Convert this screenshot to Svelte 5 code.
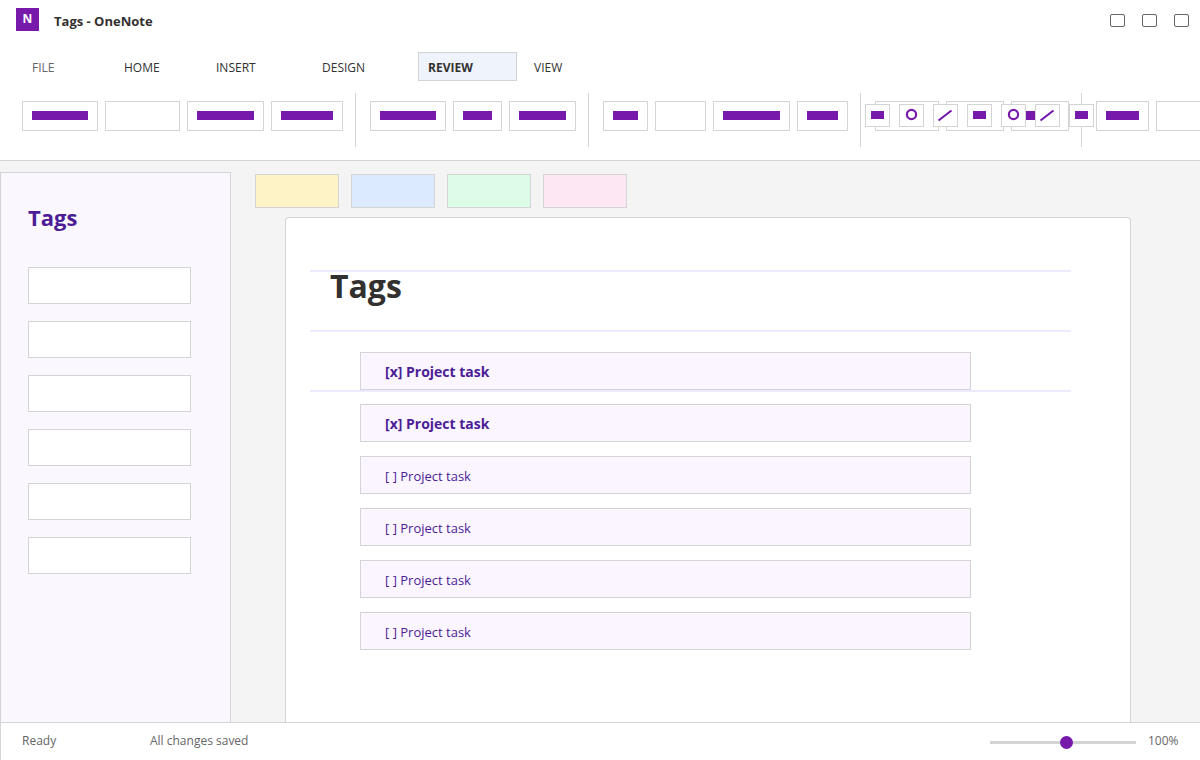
<script>
  const tabs = [
    { name: 'FILE', width: 85 },
    { name: 'HOME', width: 85 },
    { name: 'INSERT', width: 99 },
    { name: 'DESIGN', width: 99 },
    { name: 'REVIEW', width: 99 },
    { name: 'VIEW', width: 99 },
  ];

  // Ribbon commands, one array per group
  const groups = [
    [
      { width: 76, filled: true },
      { width: 75, filled: false },
      { width: 77, filled: true },
      { width: 72, filled: true },
    ],
    [
      { width: 76, filled: true },
      { width: 49, filled: true },
      { width: 67, filled: true },
    ],
    [
      { width: 45, filled: true },
      { width: 51, filled: false },
      { width: 77, filled: true },
      { width: 51, filled: true },
    ],
    [
      { width: 64, filled: false },
      { width: 58, filled: false },
      { width: 58, filled: true },
    ],
    [
      { width: 53, filled: true },
      { width: 76, filled: false },
    ],
  ];

  const tools = ['box', 'ring', 'line', 'box', 'ring', 'line', 'box'];
  const swatches = ['yellow', 'blue', 'green', 'pink'];
  const sections = [1, 2, 3, 4, 5, 6];

  let activeTab = $state('REVIEW');
  let zoom = $state(100);
  let tasks = $state([
    { text: 'Project task', done: true },
    { text: 'Project task', done: true },
    { text: 'Project task', done: false },
    { text: 'Project task', done: false },
    { text: 'Project task', done: false },
    { text: 'Project task', done: false },
  ]);
</script>

<div class="window">
  <header class="titlebar">
    <span class="logo">N</span>
    <span class="window-title">Tags - OneNote</span>
    <div class="window-controls">
      <button aria-label="Minimize"></button>
      <button aria-label="Maximize"></button>
      <button aria-label="Close"></button>
    </div>
  </header>

  <nav class="tabs">
    {#each tabs as tab}
      <button
        class="tab"
        class:file={tab.name === 'FILE'}
        class:active={activeTab === tab.name}
        style:width="{tab.width}px"
        onclick={() => (activeTab = tab.name)}
      >{tab.name}</button>
    {/each}
  </nav>

  <div class="ribbon">
    {#each groups as group}
      <div class="group">
        {#each group as command}
          <button class="command" style:width="{command.width}px" aria-label="Command">
            {#if command.filled}<span class="bar"></span>{/if}
          </button>
        {/each}
      </div>
    {/each}

    <!-- Floating drawing tools over the ribbon -->
    <div class="tools">
      {#each tools as tool}
        <button class="tool" aria-label={tool}>
          <svg width="23" height="21" viewBox="0 0 23 21">
            {#if tool === 'box'}
              <rect x="5" y="6" width="13" height="8" fill="#7719aa" />
            {:else if tool === 'ring'}
              <circle cx="11.5" cy="9.5" r="4.6" fill="none" stroke="#7719aa" stroke-width="2.2" />
            {:else}
              <path d="M4.5 15.5L17.5 5.5" fill="none" stroke="#7719aa" stroke-width="2.2" />
            {/if}
          </svg>
        </button>
      {/each}
    </div>
  </div>

  <div class="body">
    <aside class="sidebar">
      <h2>Tags</h2>
      <div class="sections">
        {#each sections as section}
          <button class="section" aria-label="Section {section}"></button>
        {/each}
      </div>
    </aside>

    <main class="content">
      <div class="swatches">
        {#each swatches as swatch}
          <button class="swatch {swatch}" aria-label={swatch}></button>
        {/each}
      </div>

      <article class="page">
        <div class="rules">
          <span></span>
          <span></span>
          <span></span>
        </div>
        <div class="note">
          <h1>Tags</h1>
          <div class="tasks">
            {#each tasks as task}
              <button
                class="task"
                class:done={task.done}
                aria-pressed={task.done}
                onclick={() => (task.done = !task.done)}
              >{task.done ? '[x]' : '[ ]'} {task.text}</button>
            {/each}
          </div>
        </div>
      </article>
    </main>
  </div>

  <footer class="statusbar">
    <span class="state">Ready</span>
    <span>All changes saved</span>
    <label class="zoom">
      <input type="range" min="0" max="190" bind:value={zoom} aria-label="Zoom" />
      <span class="zoom-value">{zoom}%</span>
    </label>
  </footer>
</div>

<style>
  :global(body) {
    margin: 0;
  }

  .window {
    display: flex;
    flex-direction: column;
    height: 100vh;
    overflow: hidden;
    background: #f4f4f4;
    color: #323130;
    font-family: 'Segoe UI', 'Open Sans', 'Noto Sans', sans-serif;
    font-size: 12px;
  }

  button {
    box-sizing: border-box;
    margin: 0;
    padding: 0;
    border: 1px solid #d4d4d4;
    border-radius: 0;
    background: #fff;
    color: inherit;
    font: inherit;
    cursor: pointer;
  }

  .titlebar {
    display: flex;
    align-items: flex-start;
    flex: none;
    box-sizing: border-box;
    height: 40px;
    padding: 8px 11px 0 16px;
    background: #fff;
  }

  .logo {
    width: 23px;
    height: 23px;
    background: #7719aa;
    color: #fff;
    font-weight: 700;
    line-height: 22px;
    text-align: center;
  }

  .window-title {
    padding: 4px 0 0 15px;
    font-size: 13px;
    font-weight: 700;
    line-height: 18px;
  }

  .window-controls {
    display: flex;
    gap: 17px;
    margin-left: auto;
    padding-top: 6px;
  }

  .window-controls button {
    width: 15px;
    height: 13px;
    border-color: #666;
    border-radius: 2px;
  }

  .tabs {
    display: flex;
    flex: none;
    gap: 7px;
    padding: 12px 22px;
    background: #fff;
  }

  .tab {
    height: 29px;
    padding: 2px 9px 0;
    border-color: transparent;
    text-align: left;
  }

  .tab.file {
    color: #666;
  }

  .tab.active {
    border-color: #d4d4d4;
    background: #eff3fb;
    font-weight: 700;
  }

  .ribbon {
    position: relative;
    display: flex;
    flex: none;
    height: 67px;
    padding-left: 22px;
    border-bottom: 1px solid #d4d4d4;
    background: #fff;
    overflow: hidden;
  }

  .group {
    display: flex;
    flex: none;
    gap: 7px;
    height: 46px;
    margin-right: 14px;
    padding: 8px 12px 0 0;
    border-right: 1px solid #d4d4d4;
  }

  .command {
    display: flex;
    flex: none;
    height: 30px;
    padding: 9px;
  }

  .bar {
    flex: 1;
    height: 9px;
    background: #7719aa;
  }

  .tools {
    position: absolute;
    top: 11px;
    left: 865px;
    display: flex;
    gap: 9px;
  }

  .tool {
    width: 25px;
    height: 23px;
  }

  .tool svg {
    display: block;
  }

  .body {
    display: flex;
    flex: 1;
    min-height: 0;
  }

  .sidebar {
    box-sizing: border-box;
    flex: none;
    width: 231px;
    margin-top: 11px;
    padding: 30px 39px 0 27px;
    border: 1px solid #d4d4d4;
    border-bottom: none;
    background: #faf7ff;
  }

  h2 {
    margin: 0 0 36px;
    color: #4c1d95;
    font-size: 22px;
    line-height: 28px;
  }

  .sections {
    display: flex;
    flex-direction: column;
    gap: 17px;
  }

  .section {
    height: 37px;
  }

  .content {
    display: flex;
    flex: 1;
    flex-direction: column;
    min-width: 0;
    padding: 13px 69px 0 54px;
  }

  .swatches {
    display: flex;
    gap: 12px;
    margin: 0 0 9px -30px;
  }

  .swatch {
    width: 84px;
    height: 34px;
  }

  .yellow { background: #fef3c7; }
  .blue { background: #dbeafe; }
  .green { background: #dcfce7; }
  .pink { background: #fce7f3; }

  .page {
    display: grid;
    flex: 1;
    align-items: start;
    min-height: 0;
    border: 1px solid #d4d4d4;
    border-bottom: none;
    border-radius: 4px 4px 0 0;
    background: #fff;
  }

  /* The ruled lines and the note share one grid cell */
  .rules,
  .note {
    grid-area: 1 / 1;
  }

  .rules {
    display: flex;
    flex-direction: column;
    gap: 58px;
    padding: 52px 59px 0 24px;
  }

  .rules span {
    height: 2px;
    background: #ede9fe;
  }

  .note {
    padding: 46px 159px 0 44px;
  }

  h1 {
    margin: 0 0 44px;
    font-size: 32px;
    line-height: 44px;
  }

  .tasks {
    display: flex;
    flex-direction: column;
    gap: 14px;
    padding-left: 30px;
  }

  .task {
    height: 38px;
    padding: 2px 24px 0;
    background: #faf5ff;
    color: #4c1d95;
    font-size: 13px;
    line-height: 20px;
    text-align: left;
  }

  .task.done {
    font-size: 14px;
    font-weight: 700;
  }

  .statusbar {
    display: flex;
    align-items: center;
    flex: none;
    box-sizing: border-box;
    height: 38px;
    padding: 0 24px 2px 21px;
    border-top: 1px solid #d4d4d4;
    border-left: 1px solid #d4d4d4;
    background: #fff;
    color: #666;
  }

  .state {
    width: 128px;
  }

  .zoom {
    display: flex;
    align-items: center;
    gap: 12px;
    margin-left: auto;
  }

  input {
    appearance: none;
    width: 146px;
    height: 13px;
    margin: 3px 0 0;
    background: linear-gradient(#d4d4d4, #d4d4d4) center / 100% 3px no-repeat;
  }

  input::-webkit-slider-thumb {
    appearance: none;
    width: 13px;
    height: 13px;
    border-radius: 50%;
    background: #7719aa;
  }

  .zoom-value {
    width: 28px;
  }
</style>
